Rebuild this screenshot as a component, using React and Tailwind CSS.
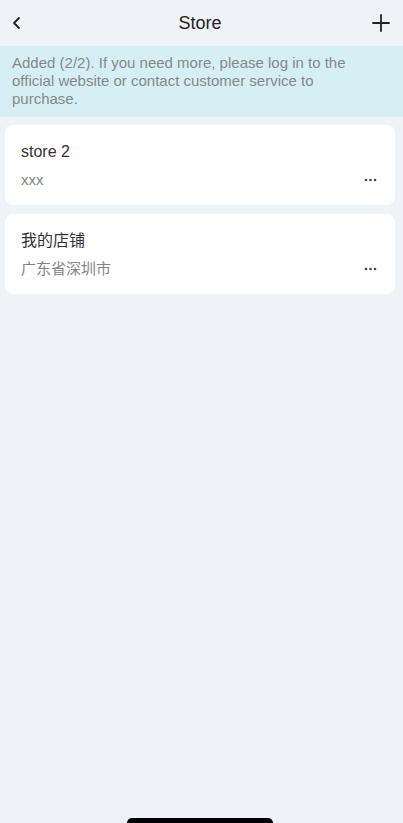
export default function App() {
  const stores = [
    { name: "store 2", addr: "xxx" },
    { name: "我的店铺", addr: "广东省深圳市" },
  ];
  return (
    <div
      className="relative h-[823px] w-full overflow-hidden bg-[#eff3f8]"
      style={{ fontFamily: '"Liberation Sans", "Noto Sans CJK SC", sans-serif' }}
    >
      <div className="flex h-[46px] items-center justify-between pl-[10px] pr-[13px]">
        <svg width="14" height="16" viewBox="0 0 14 16" fill="none">
          <path d="M9 3 L4 8 L9 13" stroke="#222" strokeWidth="1.8" strokeLinecap="round" strokeLinejoin="round" />
        </svg>
        <span className="pl-[4px] text-[18px] text-[#222]">Store</span>
        <svg width="18" height="18" viewBox="0 0 18 18" fill="none">
          <path d="M9 1 V17 M1 9 H17" stroke="#222" strokeWidth="1.8" strokeLinecap="round" />
        </svg>
      </div>
      <div className="bg-[#d6eff4] pl-3 pr-[28px] pt-[8px] pb-[9px] text-[15px] leading-[18px] text-[#84898e]">
        Added (2/2). If you need more, please log in to the official website or contact customer service to purchase.
      </div>
      <div className="flex flex-col gap-[9px] pl-[5px] pr-[8px] pt-[8px]">
        {stores.map((s) => (
          <div key={s.name} className="flex h-[80px] flex-col justify-center rounded-[8px] bg-white pl-4 pr-[18px]">
            <div className="text-[16px] leading-[20px] text-[#333]">{s.name}</div>
            <div className="mt-[9px] flex items-center justify-between">
              <span className="text-[15px] leading-[18px] text-[#848484]">{s.addr}</span>
              <svg width="13" height="4" viewBox="0 0 13 4">
                <circle cx="2" cy="2" r="1.3" fill="#444" />
                <circle cx="6.5" cy="2" r="1.3" fill="#444" />
                <circle cx="11" cy="2" r="1.3" fill="#444" />
              </svg>
            </div>
          </div>
        ))}
      </div>
      <div className="absolute bottom-0 left-[127px] h-[5px] w-[146px] rounded-t-full bg-black" />
    </div>
  );
}
